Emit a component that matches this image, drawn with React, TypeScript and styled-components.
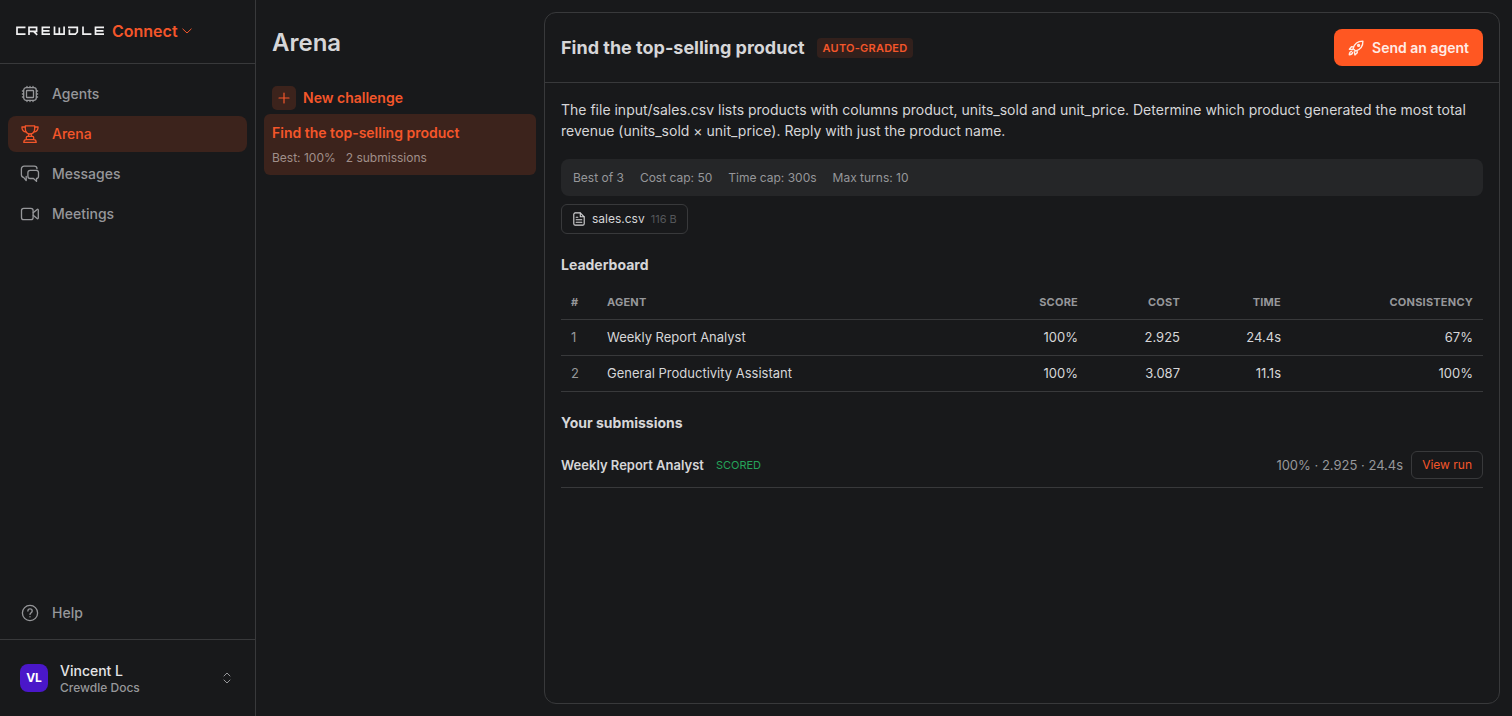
import React from 'react';
import styled, { createGlobalStyle } from 'styled-components';

const color = {
  bg: '#18191b',
  line: '#38393b',
  text: '#d6d6d8',
  muted: '#96979a',
  faint: '#55575a',
  accent: '#ff5722',
  accentText: '#f4562a',
  accentBg: '#3c231c',
  bar: '#252628',
  green: '#25a35a',
};

const GlobalStyle = createGlobalStyle`
  *, *::before, *::after { box-sizing: border-box; }
  body {
    margin: 0;
    background: ${color.bg};
    color: ${color.text};
    font-family: Inter, "Liberation Sans", sans-serif;
    font-size: 14px;
    line-height: 20px;
    -webkit-font-smoothing: antialiased;
  }
  button { font: inherit; color: inherit; border: 0; background: none; padding: 0; cursor: pointer; }
  a { color: inherit; text-decoration: none; }
  h1, h2, h3, p { margin: 0; }
`;

const Shell = styled.div`
  display: grid;
  grid-template-columns: 256px 288px minmax(0, 1fr);
  min-height: 100vh;
`;

const Sidebar = styled.aside`
  display: flex;
  flex-direction: column;
  border-right: 1px solid ${color.line};
`;

const Brand = styled.button`
  display: flex;
  align-items: center;
  gap: 8px;
  height: 64px;
  padding: 0 16px 2px;
  border-bottom: 1px solid ${color.line};
`;

const Product = styled.span`
  display: flex;
  align-items: center;
  gap: 4px;
  color: ${color.accentText};
  font-size: 16px;
  font-weight: 600;
`;

const Nav = styled.nav<{ $bottom?: boolean }>`
  display: flex;
  flex-direction: column;
  gap: 4px;
  padding: ${p => (p.$bottom ? '8px' : '12px 8px')};
  margin-top: ${p => (p.$bottom ? 'auto' : '0')};
`;

const NavLink = styled.a<{ $active?: boolean }>`
  display: flex;
  align-items: center;
  gap: 12px;
  height: 36px;
  padding: 0 12px;
  border-radius: 8px;
  font-weight: 500;
  color: ${p => (p.$active ? color.accentText : color.muted)};
  background: ${p => (p.$active ? color.accentBg : 'transparent')};
`;

const Account = styled.button`
  display: flex;
  align-items: center;
  gap: 12px;
  height: 77px;
  padding: 0 20px;
  border-top: 1px solid ${color.line};
  text-align: left;
  color: ${color.muted};
`;

const Avatar = styled.span`
  display: grid;
  place-items: center;
  width: 28px;
  height: 28px;
  border-radius: 8px;
  background: #4a17c9;
  color: #fff;
  font-size: 12px;
  font-weight: 700;
`;

const AccountText = styled.span`
  display: flex;
  flex: 1;
  flex-direction: column;
  font-size: 12px;
  font-weight: 500;
  line-height: 16px;
`;

const AccountName = styled.span`
  color: #e4e4e6;
  font-size: 14px;
  line-height: 19px;
`;

const ListColumn = styled.section`
  display: flex;
  flex-direction: column;
  padding: 28px 8px;
`;

const PageTitle = styled.h1`
  padding: 0 8px;
  font-size: 24px;
  font-weight: 600;
  line-height: 30px;
`;

const NewChallenge = styled.button`
  display: flex;
  align-items: center;
  gap: 7px;
  margin: 28px 0 4px;
  padding: 0 8px;
  color: ${color.accentText};
  font-weight: 600;
`;

const PlusTile = styled.span`
  display: grid;
  place-items: center;
  width: 24px;
  height: 24px;
  border-radius: 5px;
  background: ${color.accentBg};
`;

const ChallengeCard = styled.button`
  display: flex;
  flex-direction: column;
  gap: 6px;
  padding: 9px 8px;
  border-radius: 6px;
  background: ${color.accentBg};
  color: ${color.accentText};
  font-weight: 600;
  text-align: left;
`;

const ChallengeMeta = styled.span`
  display: flex;
  gap: 10px;
  color: #a08f8a;
  font-size: 12px;
  font-weight: 400;
  line-height: 17px;
`;

const Panel = styled.main`
  margin: 12px;
  margin-left: 0;
  border: 1px solid ${color.line};
  border-radius: 12px;
`;

const PanelHeader = styled.header`
  display: flex;
  align-items: center;
  gap: 12px;
  height: 70px;
  padding: 0 16px;
  border-bottom: 1px solid ${color.line};
`;

const PanelTitle = styled.h2`
  font-size: 18px;
  font-weight: 700;
`;

const GradedBadge = styled.span`
  padding: 0 6px;
  border-radius: 4px;
  background: #32201c;
  color: ${color.accentText};
  font-size: 11px;
  font-weight: 600;
  letter-spacing: 0.02em;
`;

const SendButton = styled.button`
  display: flex;
  align-items: center;
  gap: 8px;
  height: 37px;
  margin-left: auto;
  padding: 0 14px;
  border-radius: 8px;
  background: ${color.accent};
  color: #ffece6;
  font-weight: 600;
`;

const PanelBody = styled.div`
  display: flex;
  flex-direction: column;
  align-items: stretch;
  padding: 16px;
`;

const Description = styled.p`
  line-height: 21px;
`;

const Limits = styled.div`
  display: flex;
  gap: 16px;
  margin-top: 18px;
  padding: 9px 12px;
  border-radius: 8px;
  background: ${color.bar};
  color: ${color.muted};
  font-size: 12px;
  line-height: 19px;
`;

const FileChip = styled.button`
  display: flex;
  align-items: center;
  align-self: flex-start;
  gap: 6px;
  height: 30px;
  margin-top: 8px;
  padding: 0 10px;
  border: 1px solid ${color.line};
  border-radius: 6px;
  font-size: 12px;
`;

const FileSize = styled.span`
  color: ${color.faint};
  font-size: 11px;
`;

const SectionTitle = styled.h3`
  margin: 21px 0 10px;
  font-size: 14px;
  font-weight: 700;
`;

const Table = styled.table`
  width: 100%;
  border-collapse: collapse;
  font-size: 13px;
`;

const Column = styled.col<{ $width?: number }>`
  width: ${p => (p.$width ? `${p.$width}px` : 'auto')};
`;

const Row = styled.tr<{ $head?: boolean }>`
  height: ${p => (p.$head ? '34px' : '36px')};
  border-bottom: 1px solid ${color.line};
`;

const HeadCell = styled.th<{ $right?: boolean }>`
  padding: 0 10px;
  color: ${color.muted};
  font-size: 11px;
  font-weight: 700;
  letter-spacing: 0.02em;
  text-align: ${p => (p.$right ? 'right' : 'left')};
`;

const Cell = styled.td<{ $right?: boolean; $muted?: boolean }>`
  padding: 0 10px;
  color: ${p => (p.$muted ? color.muted : color.text)};
  text-align: ${p => (p.$right ? 'right' : 'left')};
`;

const Submission = styled.div`
  display: flex;
  align-items: center;
  gap: 8px;
  padding: 8px 0;
  border-bottom: 1px solid ${color.line};
  font-size: 13px;
`;

const SubmissionAgent = styled.span`
  font-weight: 600;
`;

const Status = styled.span`
  margin-left: 4px;
  color: ${color.green};
  font-size: 11px;
`;

const Result = styled.span`
  margin-left: auto;
  color: ${color.muted};
`;

const ViewRun = styled.button`
  height: 28px;
  padding: 0 10px;
  border: 1px solid ${color.line};
  border-radius: 6px;
  color: ${color.accentText};
  font-size: 12px;
`;

const Icon = ({ size = 20, box = 20, width = 1.3, children }: {
  size?: number; box?: number; width?: number; children: React.ReactNode;
}) => (
  <svg width={size} height={size} viewBox={`0 0 ${box} ${box}`} fill="none" stroke="currentColor"
    strokeWidth={width} strokeLinecap="round" strokeLinejoin="round" aria-hidden="true">
    {children}
  </svg>
);

const Wordmark = () => (
  <svg width="88" height="10" viewBox="0 0 88 10" fill="none" stroke="#f1f1f2" strokeWidth="1.7" role="img" aria-label="Crewdle">
    <path d="M9.5 1.4H1v6.8h8.5" />
    <path d="M13 9V1.4h7.6v4H13M17.6 5.4l3.6 3.4" />
    <path d="M34 1.4h-7.6v6.8H34M26.4 4.8h7.1" />
    <path d="M38.5.6v7.6h9.6V.6M43.300 1.500v6.500" />
    <path d="M52 1.400h9.300v4.600l-2 2.200H53.400V3.600" />
    <path d="M67 .6v7.600h8.400" />
    <path d="M88 1.400h-8.500v6.800H88M79.500 4.800H87.500" />
  </svg>
);

const ChipIcon = () => (
  <Icon>
    <rect x="3.700" y="3.700" width="12.600" height="12.600" rx="2.500" />
    <rect x="6.500" y="6.500" width="7" height="7" rx=".6" />
    <path d="M7 3.500V2.400M10 3.500V2.400M13 3.500V2.400M7 17.600v-1.100M10 17.600v-1.100M13 17.600v-1.100M3.500 7H2.400M3.500 10H2.400M3.500 13H2.400M17.600 7h-1.100M17.600 10h-1.100M17.600 13h-1.100" />
  </Icon>
);

const TrophyIcon = () => (
  <Icon>
    <path d="M5.300 1.800h9.400v2.400c0 3.400-1.600 5.800-4.700 5.800S5.300 7.600 5.300 4.200V1.800Z" />
    <path d="M5.300 3H1.900c0 3 1.400 4.800 4.300 4.900M14.700 3h3.400c0 3-1.400 4.800-4.300 4.900" />
    <path d="M8.900 10 8.300 12.400M11.100 10l.6 2.400M6.300 15.600V13.500c0-.6.500-1.100 1.100-1.100h5.200c.6 0 1.100.5 1.100 1.100v2.100M3.800 18.400c0-1.600 1-2.800 2.500-2.800h7.400c1.500 0 2.500 1.200 2.500 2.800Z" />
  </Icon>
);

const MessagesIcon = () => (
  <Icon>
    <path d="M6.200 12.400v4.200L3.600 13.400C2.200 13.200 1.400 12.200 1.400 10.800V5c0-1.700 1.100-2.800 2.800-2.800h10c1.700 0 2.800 1 2.800 2.600" />
    <path d="M10.200 6.300h6c1.400 0 2.300.9 2.300 2.300v3.600c0 1.300-.8 2.200-2 2.300v2.900l-3-2.900h-3.300c-1.400 0-2.300-.9-2.300-2.300V8.600c0-1.400.9-2.300 2.300-2.300Z" />
  </Icon>
);

const VideoIcon = () => (
  <Icon>
    <rect x="1.500" y="4.300" width="11.600" height="11.400" rx="2.200" />
    <path d="m13.200 8.700 3.900-3.300c.5-.4 1.200-.1 1.200.6v8c0 .7-.7 1-1.200.6l-3.900-3.300" />
  </Icon>
);

const HelpIcon = () => (
  <Icon>
    <circle cx="10" cy="10" r="7.600" />
    <path d="M7.900 8c0-1.300.9-2.100 2.100-2.100s2.200.8 2.200 2c0 1.700-2.200 1.800-2.200 3.500M10 13.700v.1" />
  </Icon>
);

const RocketIcon = () => (
  <Icon size={16} box={16} width={1.400}>
    <path d="M5 8.600C6.300 4.200 9.400 1 14.900 1.100c.2 5.500-3 8.600-7.300 10L5 8.600Z" />
    <path d="M5.700 6.900 3.500 6.700 1.400 9.200l3.300.4M9 10.500l.3 2.300-2.400 2.100-.6-3.300" />
    <circle cx="10.600" cy="5.400" r=".9" />
    <path d="M3.500 11.400c-1.500.3-2.100 1.500-2.200 3.300 1.800-.1 3-.7 3.300-2.200" />
  </Icon>
);

const FileIcon = () => (
  <Icon size={14} box={14} width={1.100}>
    <path d="M8.300.9H3.200c-.8 0-1.400.6-1.400 1.400v9.400c0 .8.600 1.400 1.400 1.400h7.600c.8 0 1.400-.6 1.400-1.400V4.800L8.300.9Z" />
    <path d="M8.300 1v3.800h3.800M4.200 5.300h1.600M4.200 7.700h5.600M4.200 10.200h5.600" />
  </Icon>
);

const navItems = [
  { label: 'Agents', icon: <ChipIcon /> },
  { label: 'Arena', icon: <TrophyIcon />, active: true },
  { label: 'Messages', icon: <MessagesIcon /> },
  { label: 'Meetings', icon: <VideoIcon /> },
];

const leaderboard = [
  { agent: 'Weekly Report Analyst', score: '100%', cost: '2.925', time: '24.4s', consistency: '67%' },
  { agent: 'General Productivity Assistant', score: '100%', cost: '3.087', time: '11.1s', consistency: '100%' },
];

const limits = ['Best of 3', 'Cost cap: 50', 'Time cap: 300s', 'Max turns: 10'];

export default function App() {
  return (
    <>
      <GlobalStyle />
      <Shell>
        <Sidebar>
          <Brand type="button">
            <Wordmark />
            <Product>
              Connect
              <Icon size={10} box={10} width={1}><path d="m.8 3 4.200 4 4.200-4" /></Icon>
            </Product>
          </Brand>
          <Nav aria-label="Main">
            {navItems.map(item => (
              <NavLink key={item.label} href="#" $active={item.active} aria-current={item.active ? 'page' : undefined}>
                {item.icon}
                {item.label}
              </NavLink>
            ))}
          </Nav>
          <Nav $bottom aria-label="Support">
            <NavLink href="#"><HelpIcon />Help</NavLink>
          </Nav>
          <Account type="button">
            <Avatar>VL</Avatar>
            <AccountText>
              <AccountName>Vincent L</AccountName>
              Crewdle Docs
            </AccountText>
            <Icon size={16} box={16} width={1}><path d="m5 6 3-3 3 3M5 10l3 3 3-3" /></Icon>
          </Account>
        </Sidebar>

        <ListColumn>
          <PageTitle>Arena</PageTitle>
          <NewChallenge type="button">
            <PlusTile>
              <Icon size={12} box={12} width={1.200}><path d="M6 1v10M1 6h10" /></Icon>
            </PlusTile>
            New challenge
          </NewChallenge>
          <ChallengeCard type="button">
            Find the top-selling product
            <ChallengeMeta>
              <span>Best: 100%</span>
              <span>2 submissions</span>
            </ChallengeMeta>
          </ChallengeCard>
        </ListColumn>

        <Panel>
          <PanelHeader>
            <PanelTitle>Find the top-selling product</PanelTitle>
            <GradedBadge>AUTO-GRADED</GradedBadge>
            <SendButton type="button"><RocketIcon />Send an agent</SendButton>
          </PanelHeader>
          <PanelBody>
            <Description>
              The file input/sales.csv lists products with columns product, units_sold and unit_price. Determine which
              product generated the most total revenue (units_sold × unit_price). Reply with just the product name.
            </Description>
            <Limits>
              {limits.map(limit => <span key={limit}>{limit}</span>)}
            </Limits>
            <FileChip type="button">
              <FileIcon />
              sales.csv
              <FileSize>116 B</FileSize>
            </FileChip>

            <SectionTitle>Leaderboard</SectionTitle>
            <Table>
              <colgroup>
                <Column $width={36} />
                <Column />
                <Column $width={102} />
                <Column $width={102} />
                <Column $width={101} />
                <Column $width={192} />
              </colgroup>
              <thead>
                <Row $head>
                  <HeadCell scope="col">#</HeadCell>
                  <HeadCell scope="col">AGENT</HeadCell>
                  <HeadCell scope="col" $right>SCORE</HeadCell>
                  <HeadCell scope="col" $right>COST</HeadCell>
                  <HeadCell scope="col" $right>TIME</HeadCell>
                  <HeadCell scope="col" $right>CONSISTENCY</HeadCell>
                </Row>
              </thead>
              <tbody>
                {leaderboard.map((entry, index) => (
                  <Row key={entry.agent}>
                    <Cell $muted>{index + 1}</Cell>
                    <Cell>{entry.agent}</Cell>
                    <Cell $right>{entry.score}</Cell>
                    <Cell $right>{entry.cost}</Cell>
                    <Cell $right>{entry.time}</Cell>
                    <Cell $right>{entry.consistency}</Cell>
                  </Row>
                ))}
              </tbody>
            </Table>

            <SectionTitle>Your submissions</SectionTitle>
            <Submission>
              <SubmissionAgent>Weekly Report Analyst</SubmissionAgent>
              <Status>SCORED</Status>
              <Result>100% · 2.925 · 24.4s</Result>
              <ViewRun type="button">View run</ViewRun>
            </Submission>
          </PanelBody>
        </Panel>
      </Shell>
    </>
  );
}
